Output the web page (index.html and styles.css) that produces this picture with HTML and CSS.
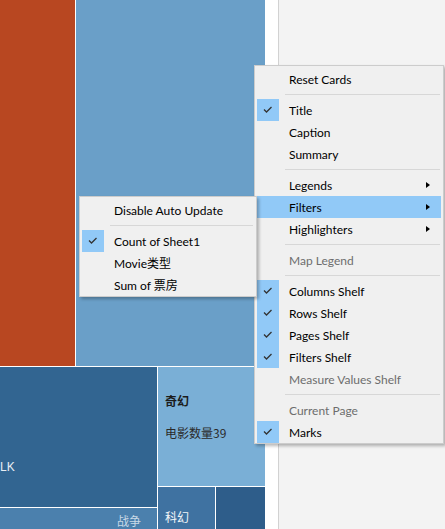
FILE: index.html
```html
<!DOCTYPE html>
<html>
<head>
<meta charset="utf-8">
<link rel="stylesheet" href="styles.css">
</head>
<body>
<div class="app">
  <div class="viz">
    <div class="row-top">
      <div class="cell orange"></div>
      <div class="cell blue-top"></div>
    </div>
    <div class="row-bottom">
      <div class="col-left">
        <div class="cell dark"><span class="lbl-lk">LK</span></div>
        <div class="cell mid"><span class="lbl-war">战争</span></div>
      </div>
      <div class="col-right">
        <div class="cell light">
          <div class="lbl-title">奇幻</div>
          <div class="lbl-count">电影数量39</div>
        </div>
        <div class="sub-row">
          <div class="cell scifi"><span class="lbl-scifi">科幻</span></div>
          <div class="cell deep"></div>
        </div>
      </div>
    </div>
  </div>
  <div class="gap"></div>
  <div class="panel"></div>
</div>

<div class="menu main-menu">
  <div class="item">Reset Cards</div>
  <div class="sep"></div>
  <div class="item checked"><span class="chk"><svg width="22" height="22" viewBox="0 0 22 22"><path d="M7 10.5 L9.5 13 L14.5 8" fill="none" stroke="#333" stroke-width="1.3"/></svg></span>Title</div>
  <div class="item">Caption</div>
  <div class="item">Summary</div>
  <div class="sep"></div>
  <div class="item sub">Legends<span class="arrow"></span></div>
  <div class="item sub hover">Filters<span class="arrow"></span></div>
  <div class="item sub">Highlighters<span class="arrow"></span></div>
  <div class="sep"></div>
  <div class="item disabled">Map Legend</div>
  <div class="sep"></div>
  <div class="item checked"><span class="chk"><svg width="22" height="22" viewBox="0 0 22 22"><path d="M7 10.5 L9.5 13 L14.5 8" fill="none" stroke="#333" stroke-width="1.3"/></svg></span>Columns Shelf</div>
  <div class="item checked"><span class="chk"><svg width="22" height="22" viewBox="0 0 22 22"><path d="M7 10.5 L9.5 13 L14.5 8" fill="none" stroke="#333" stroke-width="1.3"/></svg></span>Rows Shelf</div>
  <div class="item checked"><span class="chk"><svg width="22" height="22" viewBox="0 0 22 22"><path d="M7 10.5 L9.5 13 L14.5 8" fill="none" stroke="#333" stroke-width="1.3"/></svg></span>Pages Shelf</div>
  <div class="item checked"><span class="chk"><svg width="22" height="22" viewBox="0 0 22 22"><path d="M7 10.5 L9.5 13 L14.5 8" fill="none" stroke="#333" stroke-width="1.3"/></svg></span>Filters Shelf</div>
  <div class="item disabled">Measure Values Shelf</div>
  <div class="sep"></div>
  <div class="item disabled">Current Page</div>
  <div class="item checked"><span class="chk"><svg width="22" height="22" viewBox="0 0 22 22"><path d="M7 10.5 L9.5 13 L14.5 8" fill="none" stroke="#333" stroke-width="1.3"/></svg></span>Marks</div>
</div>

<div class="menu sub-menu">
  <div class="item">Disable Auto Update</div>
  <div class="sep"></div>
  <div class="item checked"><span class="chk"><svg width="22" height="22" viewBox="0 0 22 22"><path d="M7 10.5 L9.5 13 L14.5 8" fill="none" stroke="#333" stroke-width="1.3"/></svg></span>Count of Sheet1</div>
  <div class="item">Movie类型</div>
  <div class="item">Sum of 票房</div>
</div>
</body>
</html>
```

FILE: styles.css
```css
html, body {
  margin: 0;
  padding: 0;
}
body {
  width: 445px;
  height: 529px;
  overflow: hidden;
  position: relative;
  font-family: Lato, "Liberation Sans", "Noto Sans CJK SC", sans-serif;
  font-size: 12px;
  background: #fff;
}
.app {
  display: flex;
  height: 529px;
}
.viz {
  width: 265px;
  display: flex;
  flex-direction: column;
  gap: 1px;
  background: #fff;
}
.row-top {
  height: 366px;
  display: flex;
  gap: 1px;
}
.cell {
  position: relative;
  overflow: hidden;
}
.orange { width: 75px; background: #b84721; }
.blue-top { flex: 1; background: #6a9fc8; }
.row-bottom {
  flex: 1;
  display: flex;
  gap: 1px;
}
.col-left {
  width: 157px;
  display: flex;
  flex-direction: column;
  gap: 1px;
}
.dark {
  height: 140px;
  background: #326591;
  display: flex;
  align-items: flex-end;
}
.mid {
  flex: 1;
  background: #4b80ad;
  display: flex;
  justify-content: flex-end;
}
.col-right {
  flex: 1;
  display: flex;
  flex-direction: column;
  gap: 1px;
}
.light {
  height: 119px;
  background: #7aafd6;
  padding: 26px 0 0 7px;
  box-sizing: border-box;
  font-family: "Noto Sans CJK SC", sans-serif;
}
.sub-row {
  flex: 1;
  display: flex;
  gap: 1px;
}
.scifi {
  width: 57px;
  background: #3f72a1;
}
.deep {
  flex: 1;
  background: #2e5d8a;
}
.lbl-lk {
  color: #e8eef4;
  font-family: "Liberation Sans", sans-serif;
  font-size: 12px;
  margin: 0 0 33px 0;
}
.lbl-war {
  color: #c8d8e6;
  font-family: "Noto Sans CJK SC", sans-serif;
  font-size: 12px;
  margin: 4px 16px 0 0;
}
.lbl-title {
  color: #1c1c1c;
  font-weight: bold;
  font-size: 12px;
  line-height: 16px;
}
.lbl-count {
  color: #2a2a2a;
  font-size: 12px;
  line-height: 16px;
  margin-top: 16px;
}
.lbl-scifi {
  display: block;
  color: #f2f5f8;
  font-family: "Noto Sans CJK SC", sans-serif;
  font-size: 12px;
  padding: 21px 0 0 7px;
}
.gap {
  width: 13px;
  background: #fff;
}
.panel {
  flex: 1;
  background: #f3f3f3;
  border-left: 1px solid #d2d2d2;
}

.menu {
  position: absolute;
  background: #f0f0f0;
  border: 1px solid #cccccc;
  box-shadow: 2px 2px 3px rgba(0, 0, 0, 0.28);
  padding: 2px 0 0;
  box-sizing: border-box;
}
.main-menu {
  left: 254px;
  top: 65px;
  width: 190px;
}
.sub-menu {
  left: 79px;
  top: 196px;
  width: 178px;
}
.item {
  position: relative;
  height: 22px;
  line-height: 24px;
  margin: 0 2px;
  padding-left: 32px;
  color: #000;
  white-space: nowrap;
}
.item.hover {
  background: #91c9f7;
}
.item.disabled {
  color: #6d6d6d;
}
.chk {
  position: absolute;
  left: 0;
  top: 0;
  width: 22px;
  height: 22px;
  background: #91c9f7;
}
.chk svg {
  display: block;
}
.arrow {
  position: absolute;
  right: 11px;
  top: 8px;
  width: 0;
  height: 0;
  border-top: 3.5px solid transparent;
  border-bottom: 3.5px solid transparent;
  border-left: 4px solid #000;
}
.sep {
  height: 1px;
  margin: 4px 3px 4px 30px;
  background: #d7d7d7;
}
```
